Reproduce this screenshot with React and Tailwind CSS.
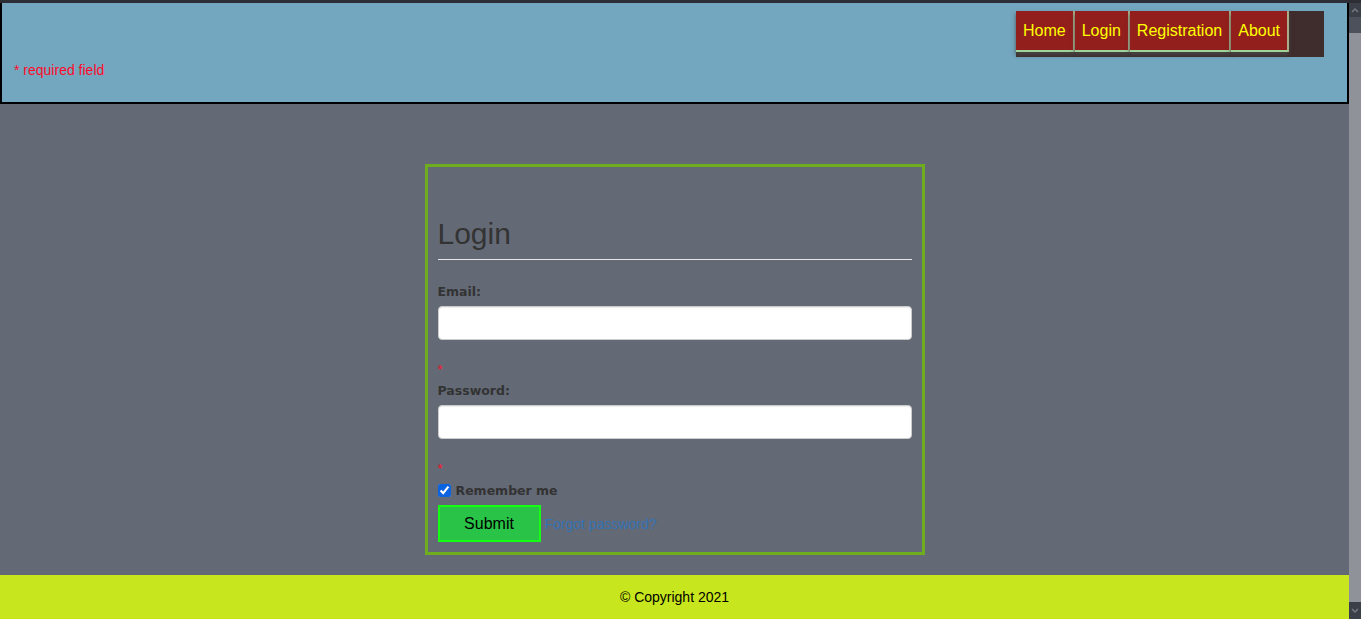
export default function App() {
  const arial = { fontFamily: '"Liberation Sans", Arial, sans-serif' };
  const dejavu = { fontFamily: '"DejaVu Sans", Verdana, sans-serif' };
  const navItems = ["Home", "Login", "Registration", "About"];
  return (
    <div className="w-[1361px] h-[619px] overflow-hidden flex flex-col bg-[#636975]" style={arial}>
      <div className="h-[3px] bg-[#2c2d35] shrink-0" />
      <div className="flex flex-1 min-h-0">
        <div className="w-[1349px] flex flex-col">
          {/* Header */}
          <header className="h-[101px] bg-[#73a7bf] border-x-2 border-b-2 border-black flex flex-col">
            <div className="flex justify-end pt-[8px] pr-[23px]">
              <nav className="w-[308px] h-[46px] bg-[#3f2c2c] flex items-start">
                {navItems.map((n) => (
                  <a
                    key={n}
                    href="#"
                    className="bg-[#931f1c] text-[#ffff00] text-[16px] leading-[18px] pl-[7px] pr-[7px] pt-[11px] pb-[10px] border-r-2 border-b-2 border-r-[#a9ae88] border-b-[#9ed39a] shadow-[0_3px_4px_rgba(70,70,70,0.9)]"
                  >
                    {n}
                  </a>
                ))}
              </nav>
            </div>
            <p className="mt-[5px] pl-[12px] text-[14px] leading-[16px] text-[#ff0a2a]">* required field</p>
          </header>

          {/* Main */}
          <main className="flex-1 flex justify-center pt-[60px]">
            <div className="w-[500px] h-[391px] border-[3px] border-[#6dad1e] px-[10px] pt-[50px] pb-[10px] flex flex-col">
              <h2 className="text-[30px] leading-[33px] text-[#333333]">Login</h2>
              <div className="mt-[9px] h-px bg-[#e6e6e6]" />
              <label className="mt-[23px] mb-[6px] text-[12.5px] leading-[17px] font-bold text-[#333333]" style={dejavu}>
                Email:
              </label>
              <input
                type="text"
                className="h-[34px] w-full bg-white border border-[#cccccc] rounded-[4px] shadow-[inset_0_1px_1px_rgba(0,0,0,0.075)] outline-none"
              />
              <span className="mt-[22px] h-[15px] text-[13px] leading-[15px] text-[#ff0a2a]">*</span>
              <label className="mt-[5px] mb-[6px] text-[12.5px] leading-[17px] font-bold text-[#333333]" style={dejavu}>
                Password:
              </label>
              <input
                type="password"
                className="h-[34px] w-full bg-white border border-[#cccccc] rounded-[4px] shadow-[inset_0_1px_1px_rgba(0,0,0,0.075)] outline-none"
              />
              <span className="mt-[22px] h-[15px] text-[13px] leading-[15px] text-[#ff0a2a]">*</span>
              <div className="mt-[6px] h-[17px] flex items-center gap-[5px]">
                <input type="checkbox" defaultChecked className="m-0 w-[13px] h-[13px] accent-[#0b63e0]" />
                <span className="text-[12.5px] leading-[17px] font-bold text-[#333333]" style={dejavu}>
                  Remember me
                </span>
              </div>
              <div className="mt-[6px] flex items-baseline gap-[4px]">
                <button className="w-[103px] h-[37px] bg-[#29c447] border-2 border-[#14ff14] text-[16px] text-black">
                  Submit
                </button>
                <a href="#" className="text-[14px] text-[#3472b3]">
                  Forgot password?
                </a>
              </div>
            </div>
          </main>

          {/* Footer */}
          <footer className="h-[44px] shrink-0 bg-[#c8e61d] flex items-center justify-center">
            <span className="text-[14px] leading-[16px] text-black">© Copyright 2021</span>
          </footer>
        </div>

        {/* Scrollbar */}
        <div className="w-[12px] flex flex-col bg-[#8f9299]">
          <div className="h-[14px] bg-[#3b3f48] flex items-center justify-center">
            <svg width="8" height="5" viewBox="0 0 8 5">
              <polyline points="1,4 4,1 7,4" fill="none" stroke="#737780" strokeWidth="1.5" />
            </svg>
          </div>
          <div className="h-[16px] bg-[#4c515b]" />
          <div className="flex-1" />
          <div className="h-[17px] bg-[#3b3f48] flex items-center justify-center">
            <svg width="8" height="5" viewBox="0 0 8 5">
              <polyline points="1,1 4,4 7,1" fill="none" stroke="#737780" strokeWidth="1.5" />
            </svg>
          </div>
        </div>
      </div>
    </div>
  );
}
